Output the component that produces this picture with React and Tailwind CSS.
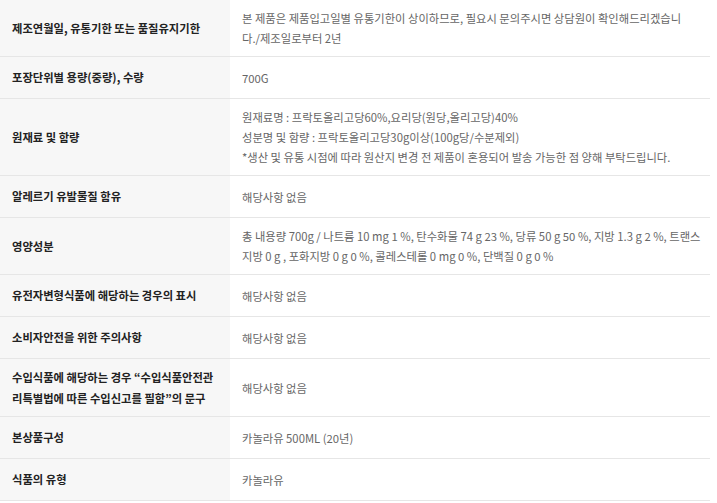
import React from 'react';

const rows = [
  {
    label: ['제조연월일, 유통기한 또는 품질유지기한'],
    value: [
      '본 제품은 제품입고일별 유통기한이 상이하므로, 필요시 문의주시면 상담원이 확인해드리겠습니',
      '다./제조일로부터 2년',
    ],
  },
  { label: ['포장단위별 용량(중량), 수량'], value: ['700G'] },
  {
    label: ['원재료 및 함량'],
    value: [
      '원재료명 : 프락토올리고당60%,요리당(원당,올리고당)40%',
      '성분명 및 함량 : 프락토올리고당30g이상(100g당/수분제외)',
      '*생산 및 유통 시점에 따라 원산지 변경 전 제품이 혼용되어 발송 가능한 점 양해 부탁드립니다.',
    ],
  },
  { label: ['알레르기 유발물질 함유'], value: ['해당사항 없음'] },
  {
    label: ['영양성분'],
    value: [
      '총 내용량 700g / 나트륨 10 mg 1 %, 탄수화물 74 g 23 %, 당류 50 g 50 %, 지방 1.3 g 2 %, 트랜스',
      '지방 0 g , 포화지방 0 g 0 %, 콜레스테롤 0 mg 0 %, 단백질 0 g 0 %',
    ],
  },
  { label: ['유전자변형식품에 해당하는 경우의 표시'], value: ['해당사항 없음'] },
  { label: ['소비자안전을 위한 주의사항'], value: ['해당사항 없음'] },
  {
    label: ['수입식품에 해당하는 경우 “수입식품안전관', '리특별법에 따른 수입신고를 필함”의 문구'],
    value: ['해당사항 없음'],
  },
  { label: ['본상품구성'], value: ['카놀라유 500ML (20년)'] },
  { label: ['식품의 유형'], value: ['카놀라유'] },
];

const App = () => {
  return (
    <div className="w-[717px] h-[503px] bg-white overflow-hidden font-['Noto_Sans_CJK_KR','Noto_Sans',sans-serif] text-[11.3px]">
      <div className="w-[710px] flex flex-col">
        {rows.map((row, idx) => (
          <div key={idx} className="flex min-h-[42px] border-b border-[#e6e6e6]">
            {/* label */}
            <div className="w-[230px] shrink-0 bg-[#f7f7f7] px-3 py-2 flex flex-col justify-center leading-[20.5px] font-bold text-[#222]">
              {row.label.map((line, i) => (
                <span key={i} className="whitespace-nowrap">{line}</span>
              ))}
            </div>
            {/* value */}
            <div className="flex-1 px-3 py-2 flex flex-col justify-center leading-5 text-[#666]">
              {row.value.map((line, i) => (
                <span key={i} className="whitespace-nowrap">{line}</span>
              ))}
            </div>
          </div>
        ))}
      </div>
    </div>
  );
};

export default App;
